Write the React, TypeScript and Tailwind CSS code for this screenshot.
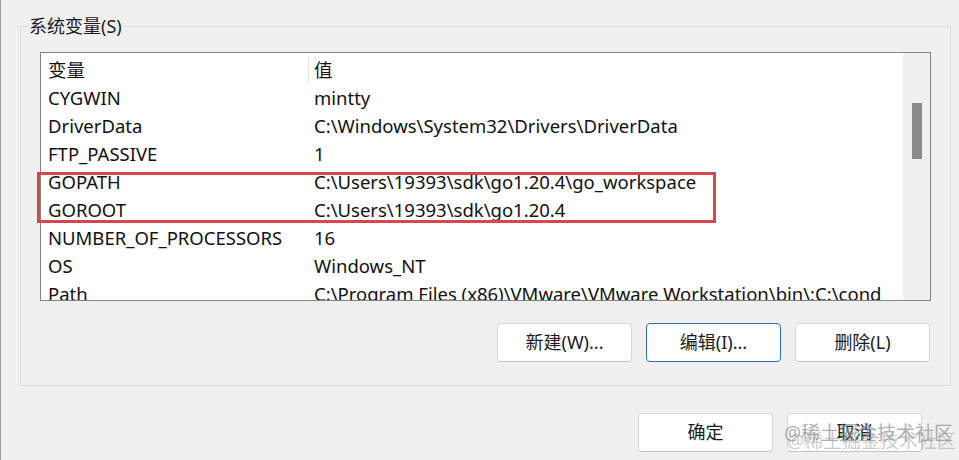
import type { ReactNode } from "react";

// 环境变量对话框 — 系统变量区
const vars: { name: string; value: string }[] = [
  { name: "CYGWIN", value: "mintty" },
  { name: "DriverData", value: "C:\\Windows\\System32\\Drivers\\DriverData" },
  { name: "FTP_PASSIVE", value: "1" },
  { name: "GOPATH", value: "C:\\Users\\19393\\sdk\\go1.20.4\\go_workspace" },
  { name: "GOROOT", value: "C:\\Users\\19393\\sdk\\go1.20.4" },
  { name: "NUMBER_OF_PROCESSORS", value: "16" },
  { name: "OS", value: "Windows_NT" },
  { name: "Path", value: "C:\\Program Files (x86)\\VMware\\VMware Workstation\\bin\\;C:\\cond" },
];

function Botao({ children, foco = false }: { children: ReactNode; foco?: boolean }) {
  return (
    <button
      className={`h-[39px] w-[135px] rounded-[4px] border bg-white text-[18px] text-[#1b1b1b] ${
        foco ? "border-[#2f6fae]" : "border-[#d6d6d6] border-b-[#c2c2c2]"
      }`}
    >
      {children}
    </button>
  );
}

export default function App() {
  return (
    <div className="relative h-[460px] w-[959px] overflow-hidden border-l border-[#9c9c9c] bg-[#f0f0f0] font-['Noto_Sans','Noto_Sans_CJK_SC',sans-serif] text-[#111]">
      <fieldset className="ml-[19px] mt-[16px] h-[370px] w-[931px] border border-[#dcdcdc] p-0">
        <legend className="ml-[7px] px-[1px] text-[18px] leading-[20px] text-[#1b1b1b]">系统变量(S)</legend>

        <div className="ml-[19px] mt-[16px] flex h-[249px] w-[891px] overflow-hidden border border-[#828282] bg-white">
          <div className="min-w-0 flex-1 pt-[3px] text-[18.5px] leading-[28px]">
            <div className="flex h-[28px]">
              <div className="w-[267px] pl-[7px]">变量</div>
              <div className="flex-1 border-l border-[#e8e8e8] pl-[5px]">值</div>
            </div>
            {vars.map((v) => (
              <div key={v.name} className="flex h-[28px] whitespace-nowrap">
                <div className="w-[267px] pl-[7px]">{v.name}</div>
                <div className="flex-1 overflow-hidden pl-[6px]">{v.value}</div>
              </div>
            ))}
          </div>
          <div className="flex w-[27px] shrink-0 justify-center border-l border-[#f0f0f0] bg-[#f0f0f0] pt-[50px]">
            <div className="h-[56px] w-[10px] bg-[#8a8a8a]" />
          </div>
        </div>

        <div className="mr-[20px] mt-[22px] flex justify-end gap-[14px]">
          <Botao>新建(W)...</Botao>
          <Botao foco>编辑(I)...</Botao>
          <Botao>删除(L)</Botao>
        </div>
      </fieldset>

      <div className="mr-[37px] mt-[27px] flex justify-end gap-[14px]">
        <Botao>确定</Botao>
        <Botao>取消</Botao>
      </div>

      {/* 红框标注 */}
      <div className="pointer-events-none absolute left-[36px] top-[172px] h-[51px] w-[679px] border-[3px] border-[#d8474d]" />

      {/* 水印 */}
      <div className="pointer-events-none absolute left-[783px] top-[421px] text-[19px] leading-[24px] text-[#8a8a8a]/70">
        @稀土掘金技术社区
      </div>
      <div className="pointer-events-none absolute left-[786px] top-[429px] text-[19px] leading-[24px] text-[#9a9a9a]/50">
        @稀土掘金技术社区
      </div>
    </div>
  );
}
